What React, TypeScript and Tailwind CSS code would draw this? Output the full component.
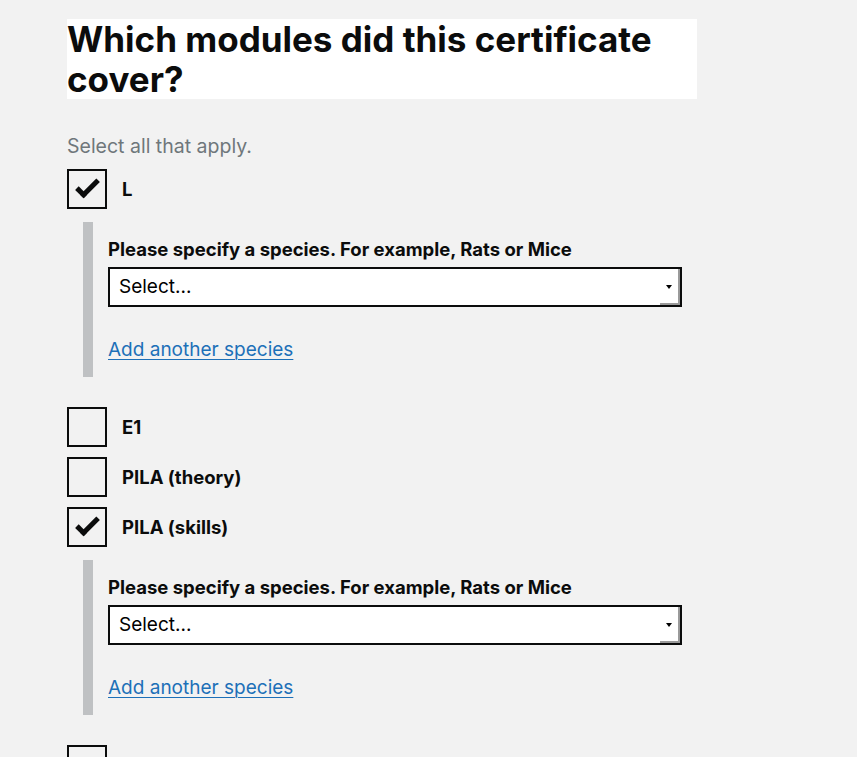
import React from "react";

type Item = { label: string; checked: boolean; species?: boolean };

const items: Item[] = [
  { label: "L", checked: true, species: true },
  { label: "E1", checked: false },
  { label: "PILA (theory)", checked: false },
  { label: "PILA (skills)", checked: true, species: true },
  { label: "PIL A", checked: false },
];

function Checkbox({ item }: { item: Item }) {
  return (
    <div className="flex items-center h-[40px]">
      <div className="relative w-[40px] h-[40px] border-2 border-[#0b0c0c] shrink-0">
        {item.checked && (
          <span className="absolute top-[9px] left-[7px] w-[23px] h-[12px] border-l-[5px] border-b-[5px] border-[#0b0c0c] -rotate-45" />
        )}
      </div>
      <span className="pl-[15px] text-[18.5px] leading-[25px] font-bold text-[#0b0c0c]">
        {item.label}
      </span>
    </div>
  );
}

function SpeciesBlock() {
  return (
    <div className="ml-[16px] mt-[13px] border-l-[10px] border-[#bfc1c3] pl-[15px] py-[15px] flex flex-col">
      <label className="text-[18.5px] leading-[25px] font-bold text-[#0b0c0c]">
        Please specify a species. For example, Rats or Mice
      </label>
      <div className="relative mt-[5px] w-[574px] h-[40px]">
        <select className="appearance-none block w-full h-full border-2 border-[#0b0c0c] bg-white pl-[9px] text-[19px] text-black font-['Inter',sans-serif] outline-none">
          <option>Select...</option>
        </select>
        {/* native-looking drop button */}
        <span className="pointer-events-none absolute right-[10px] top-[18px] w-0 h-0 border-l-[3px] border-r-[3px] border-t-[4px] border-l-transparent border-r-transparent border-t-black" />
        <span className="pointer-events-none absolute right-[2px] top-[2px] bottom-[2px] w-[2px] bg-[#9a9a9a]" />
        <span className="pointer-events-none absolute right-[2px] bottom-[2px] w-[20px] h-[2px] bg-[#9a9a9a]" />
      </div>
      <a
        href="#"
        className="mt-[30px] w-fit text-[19px] leading-[25px] text-[#1d70b8] underline underline-offset-[3px] decoration-1"
      >
        Add another species
      </a>
    </div>
  );
}

export default function App() {
  return (
    <div className="min-h-screen bg-[#f2f2f2] pl-[67px] pt-[19px] font-['Inter',sans-serif] overflow-hidden">
      <h1 className="w-[630px] bg-white text-[35px] leading-[40px] font-bold text-[#0b0c0c]">
        Which modules did this certificate cover?
      </h1>
      <p className="mt-[35px] mb-[10px] text-[19.5px] leading-[25px] text-[#6f777b]">
        Select all that apply.
      </p>
      <div className="flex flex-col">
        {items.map((item, i) => (
          <div
            key={item.label}
            className={i === 0 ? "" : item.label === "E1" || item.label === "PIL A" ? "mt-[30px]" : "mt-[10px]"}
          >
            <Checkbox item={item} />
            {item.species && <SpeciesBlock />}
          </div>
        ))}
      </div>
    </div>
  );
}
